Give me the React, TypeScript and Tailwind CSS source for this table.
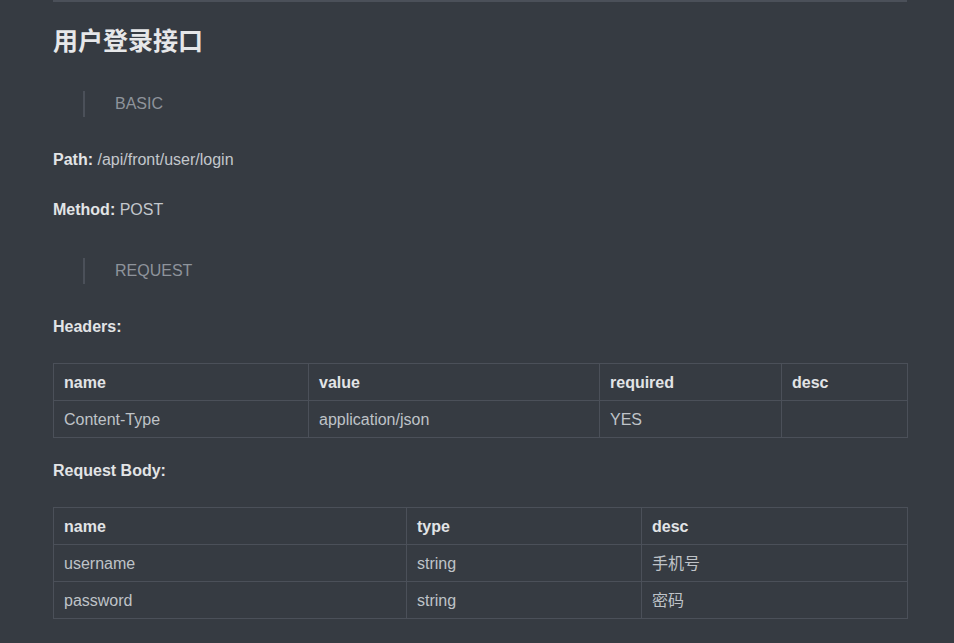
import React from "react";

const font = { fontFamily: '"Helvetica Neue", "Liberation Sans", Arial, "Noto Sans CJK SC", sans-serif' };

function Quote({ text, className }: { text: string; className?: string }) {
  return (
    <div className={"ml-[30px] border-l-2 border-[#4b5059] pl-[30px] text-[16px] leading-[26px] text-[#8e939b] " + (className ?? "")}>
      {text}
    </div>
  );
}

function Table({ cols, widths, rows }: { cols: string[]; widths: number[]; rows: string[][] }) {
  return (
    <table className="w-[854px] table-fixed border-collapse text-[16px]">
      <colgroup>
        {widths.map((w, i) => (
          <col key={i} style={{ width: w }} />
        ))}
      </colgroup>
      <thead>
        <tr>
          {cols.map((c) => (
            <th key={c} className="h-[37px] border border-[#4b5059] px-[10px] pt-[1px] pb-0 text-left font-bold text-[#e2e4e6]">
              {c}
            </th>
          ))}
        </tr>
      </thead>
      <tbody>
        {rows.map((r, i) => (
          <tr key={i}>
            {r.map((c, j) => (
              <td key={j} className="h-[37px] border border-[#4b5059] px-[10px] pt-[1px] pb-0 text-[#bfc3c8]">
                {c}
              </td>
            ))}
          </tr>
        ))}
      </tbody>
    </table>
  );
}

export default function App() {
  return (
    <div className="min-h-screen bg-[#363b42]" style={font}>
      <div className="ml-[53px] w-[854px] pb-10">
        <div className="h-[2px] bg-[#4b5059]" />
        <h1 className="mt-[24px] text-[25px] font-bold leading-[30px] text-[#e6e7e9]">用户登录接口</h1>
        <Quote text="BASIC" className="mt-[35px]" />
        <p className="mt-[31px] text-[16px] leading-[24px] text-[#c3c7cc]">
          <span className="font-bold text-[#e2e4e6]">Path:</span> /api/front/user/login
        </p>
        <p className="mt-[26px] text-[16px] leading-[24px] text-[#c3c7cc]">
          <span className="font-bold text-[#e2e4e6]">Method:</span> POST
        </p>
        <Quote text="REQUEST" className="mt-[36px]" />
        <p className="mt-[31px] text-[16px] font-bold leading-[24px] text-[#e2e4e6]">Headers:</p>
        <div className="mt-[24px]">
          <Table
            cols={["name", "value", "required", "desc"]}
            widths={[255, 291, 182, 126]}
            rows={[["Content-Type", "application/json", "YES", ""]]}
          />
        </div>
        <p className="mt-[21px] text-[16px] font-bold leading-[24px] text-[#e2e4e6]">Request Body:</p>
        <div className="mt-[24px]">
          <Table
            cols={["name", "type", "desc"]}
            widths={[353, 235, 266]}
            rows={[
              ["username", "string", "手机号"],
              ["password", "string", "密码"],
            ]}
          />
        </div>
      </div>
    </div>
  );
}
